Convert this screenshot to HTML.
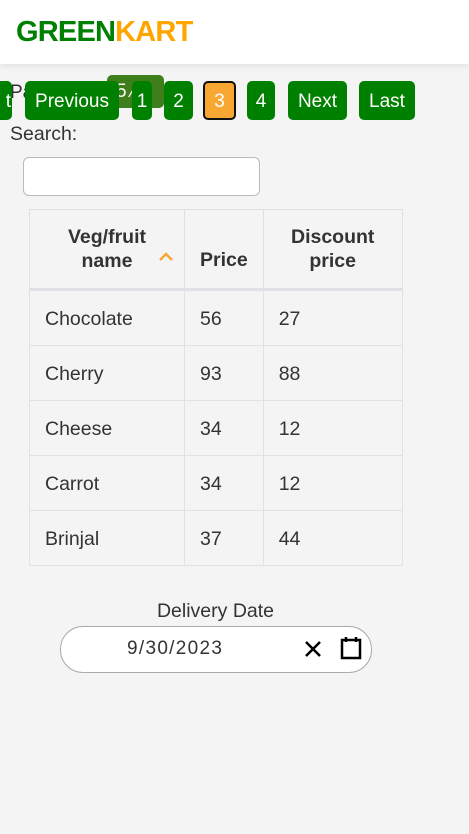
<!DOCTYPE html>
<html><head><style>
body{margin:0;width:469px;height:834px;background:#f4f4f4;font-family:"Liberation Sans",sans-serif;position:relative;overflow:hidden;color:#333}
.hdr{position:absolute;left:0;top:0;width:469px;height:64px;background:#fff;box-shadow:0 2px 6px rgba(0,0,0,.08)}
.logo{position:absolute;left:16px;top:16px;font-size:29px;font-weight:bold;letter-spacing:-0.8px}
.b{position:absolute;top:81px;height:39px;background:#008000;color:#fff;border-radius:5px;font-size:19px;line-height:41px;text-align:center}
.abs{position:absolute}
table{position:absolute;left:29px;top:209px;border-collapse:collapse;font-size:19.5px}
td,th{border:1px solid #dfe1e5;padding:0 15px;text-align:left}
th{height:62px;font-weight:bold;text-align:center;border-bottom:3px solid #dfe1e5;font-size:19.5px;line-height:24px}
td{height:52px;padding-top:2px}
</style></head><body>
<div class="hdr"><div class="logo"><span style="color:#008000">GREEN</span><span style="color:#ffa500">KART</span></div></div>
<div class="abs" style="left:10px;top:82px;font-size:19px">Pa</div>
<div class="abs" style="left:107px;top:75px;width:57px;height:33px;background:#3f7f1b;border-radius:5px;color:#fff;font-size:19px;line-height:33px;padding-left:9px;box-sizing:border-box">5 ⁄</div>
<div class="b" style="left:-10px;width:21px;text-align:right;padding-right:1px">t</div>
<div class="b" style="left:25px;width:94px">Previous</div>
<div class="b" style="left:132px;width:20px">1</div>
<div class="b" style="left:164px;width:29px">2</div>
<div class="b" style="left:203px;width:29px;height:35px;line-height:37px;background:#f9a733;border:2px solid #111">3</div>
<div class="b" style="left:247px;width:28px">4</div>
<div class="b" style="left:288px;width:59px">Next</div>
<div class="b" style="left:359px;width:56px">Last</div>
<div class="abs" style="left:10px;top:123px;font-size:19.5px">Search:</div>
<div class="abs" style="left:23px;top:157px;width:235px;height:37px;background:#fff;border:1px solid #bbb;border-radius:6px"></div>
<table>
<tr><th style="width:124px;position:relative">Veg/fruit<br>name<svg style="position:absolute;left:128px;top:42px" width="16" height="10"><path d="M2 8L8 2L14 8" fill="none" stroke="#f9a733" stroke-width="2.5"/></svg></th><th style="width:47px;vertical-align:bottom;padding-bottom:16px">Price</th><th style="width:108px">Discount<br>price</th></tr>
<tr><td>Chocolate</td><td>56</td><td>27</td></tr>
<tr><td>Cherry</td><td>93</td><td>88</td></tr>
<tr><td>Cheese</td><td>34</td><td>12</td></tr>
<tr><td>Carrot</td><td>34</td><td>12</td></tr>
<tr><td>Brinjal</td><td>37</td><td>44</td></tr>
</table>
<div class="abs" style="left:0;width:431px;top:600px;text-align:center;font-size:19.5px">Delivery Date</div>
<div class="abs" style="left:60px;top:626px;width:310px;height:45px;background:#fff;border:1px solid #aaa;border-radius:23px"></div>
<div class="abs" style="left:127px;top:638px;font-size:19px;letter-spacing:1.3px">9/30/2023</div>
<svg class="abs" style="left:304px;top:640px" width="18" height="18"><path d="M2 2L16 16M16 2L2 16" stroke="#000" stroke-width="2.5"/></svg>
<svg class="abs" style="left:340px;top:636px" width="22" height="24"><rect x="2" y="4" width="18" height="18" fill="none" stroke="#000" stroke-width="2.5"/><path d="M6 1v5M16 1v5" stroke="#000" stroke-width="2.5"/></svg>
</body></html>
